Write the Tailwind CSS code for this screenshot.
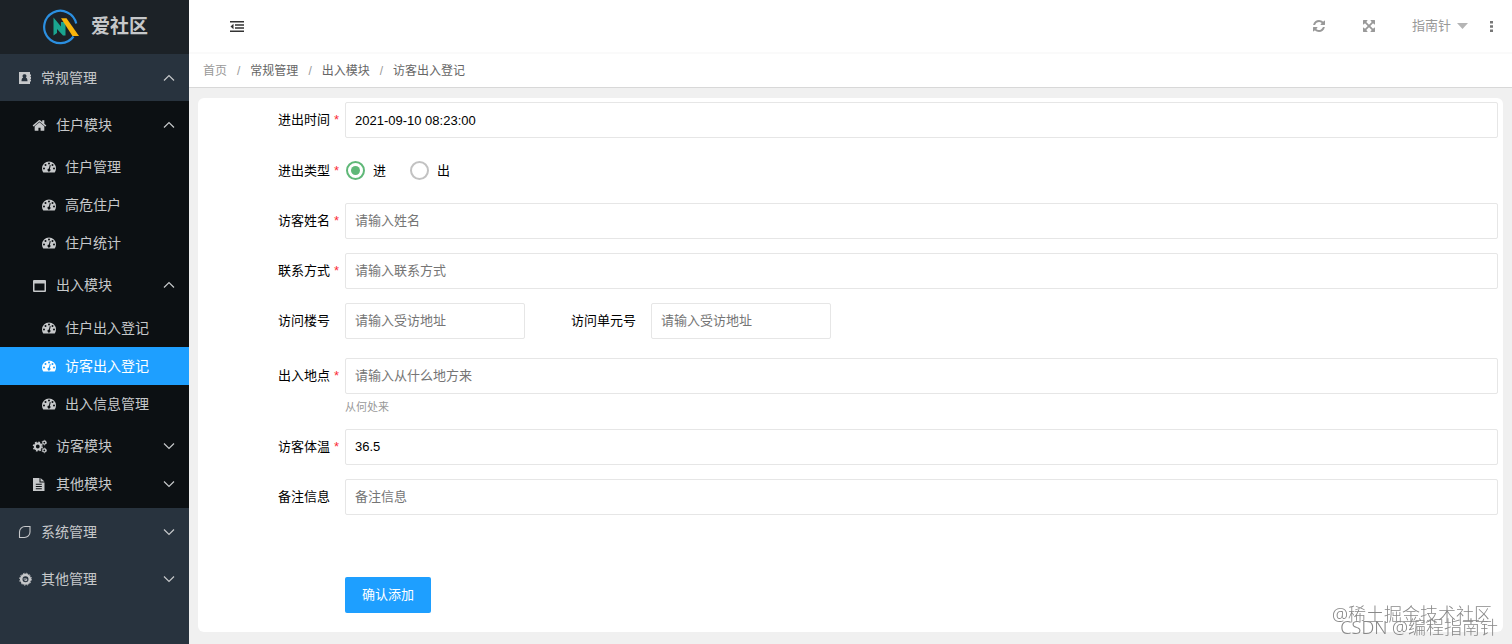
<!DOCTYPE html>
<html lang="zh-CN">
   <head>
      <meta charset="UTF-8" />
      <meta name="viewport" content="width=device-width, initial-scale=1.0" />
      <title>爱社区</title>
      <script src="https://cdn.jsdelivr.net/npm/@tailwindcss/browser@4"></script>
   </head>
   <body
      class="min-h-screen flex bg-[#f0f0f0] text-[13px] text-black font-['Liberation_Sans','Noto_Sans_CJK_SC',sans-serif]"
   >
      <!-- shared icons -->
      <svg class="hidden">
         <symbol id="dash" viewBox="0 0 14 12">
            <path
               fill="currentColor"
               fill-rule="evenodd"
               d="M7 .5a7 7 0 0 1 7 7c0 1.4-.4 2.6-1.1 3.7-.2.2-.4.3-.6.3H1.7c-.2 0-.4-.1-.6-.3A6.800 6.800 0 0 1 0 7.500a7 7 0 0 1 7-7zM2 6.500a1 1 0 1 0 0 2 1 1 0 0 0 0-2zM3.500 3a1 1 0 1 0 0 2 1 1 0 0 0 0-2zM7 1.500a1 1 0 1 0 0 2 1 1 0 0 0 0-2zM10.500 3a1 1 0 1 0 0 2 1 1 0 0 0 0-2zM12 6.500a1 1 0 1 0 0 2 1 1 0 0 0 0-2zM7.700 4.300l-.8 3.200a1.500 1.500 0 1 0 1 .3l.8-3.200c.1-.6-.8-.9-1-.3z"
            />
         </symbol>
         <symbol id="up" viewBox="0 0 12 8">
            <path d="M1 6.500 6 1.500l5 5" fill="none" stroke="currentColor" stroke-width="1.200" />
         </symbol>
         <symbol id="down" viewBox="0 0 12 8">
            <path d="M1 1.500l5 5 5-5" fill="none" stroke="currentColor" stroke-width="1.200" />
         </symbol>
      </svg>

      <!-- sidebar -->
      <aside class="w-[189px] shrink-0 bg-[#28333e] text-sm text-[#c6c8ca]">
         <div class="h-[54px] flex items-center pl-[43px] gap-3 bg-[#1c2227]">
            <svg class="size-9" viewBox="0 0 36 36" fill="none">
               <path
                  d="M33.200 14.500A16.200 16.200 0 1 0 30.500 27.500"
                  stroke="#2b8fe0"
                  stroke-width="2.200"
               />
               <path d="M10.500 8.500 18 17.500V13h4.500v13.500h-2.500L14 20v4l-3.500 2.500z" fill="#1aa58f" />
               <path d="M18 9.300h5.500L36 27h-6.500z" fill="#f9b50b" />
            </svg>
            <h1 class="text-[19px] font-bold">爱社区</h1>
         </div>
         <nav>
            <a href="#" class="h-[47px] flex items-center pl-[18px] pr-[14px]">
               <svg class="w-[14px] h-[14px] mr-[9px]" viewBox="0 0 14 14">
                  <path
                     fill="currentColor"
                     fill-rule="evenodd"
                     d="M1 1h11v2.500h1v2h-1V6h1v2h-1v.5h1v2h-1V13H1zM6.500 3.200a1.800 1.800 0 0 0-1.300 3.200C4 6.800 3.500 8 3.500 10.300h6c0-2.300-.5-3.500-1.700-3.900a1.800 1.800 0 0 0-1.300-3.200z"
                  />
               </svg>
               常规管理
               <svg class="w-3 h-2 ml-auto"><use href="#up" /></svg>
            </a>
            <div class="bg-[#0c1013] py-[5px]">
               <a href="#" class="h-[38px] flex items-center pl-8 pr-[14px]">
                  <svg class="size-[15px] mr-[9px]" viewBox="0 0 1792 1792">
                     <path
                        fill="currentColor"
                        d="M1472 992v480q0 26-19 45t-45 19h-384v-384h-256v384h-384q-26 0-45-19t-19-45v-480q0-1 .5-3t.5-3l575-474 575 474q1 2 1 6zm223-69l-62 74q-8 9-21 11h-3q-13 0-21-7l-692-577-692 577q-12 8-24 7-13-2-21-11l-62-74q-8-10-7-23.500t11-21.500l719-599q32-26 76-26t76 26l244 204v-195q0-14 9-23t23-9h192q14 0 23 9t9 23v408l219 182q10 8 11 21.500t-7 23.500z"
                     />
                  </svg>
                  住户模块
                  <svg class="w-3 h-2 ml-auto"><use href="#up" /></svg>
               </a>
               <div class="py-1">
                  <a href="#" class="h-[38px] flex items-center gap-[9px] pl-[42px]">
                     <svg class="w-[14px] h-3"><use href="#dash" /></svg>住户管理
                  </a>
                  <a href="#" class="h-[38px] flex items-center gap-[9px] pl-[42px]">
                     <svg class="w-[14px] h-3"><use href="#dash" /></svg>高危住户
                  </a>
                  <a href="#" class="h-[38px] flex items-center gap-[9px] pl-[42px]">
                     <svg class="w-[14px] h-3"><use href="#dash" /></svg>住户统计
                  </a>
               </div>
               <a href="#" class="h-[38px] flex items-center pl-8 pr-[14px]">
                  <svg class="size-[15px] mr-[9px]" viewBox="0 0 15 15">
                     <path
                        fill="currentColor"
                        fill-rule="evenodd"
                        d="M2 2h11a1 1 0 0 1 1 1v10a1 1 0 0 1-1 1H2a1 1 0 0 1-1-1V3a1 1 0 0 1 1-1zm.500 3.500v7h10v-7z"
                     />
                  </svg>
                  出入模块
                  <svg class="w-3 h-2 ml-auto"><use href="#up" /></svg>
               </a>
               <div class="pt-[5px] pb-1">
                  <a href="#" class="h-[38px] flex items-center gap-[9px] pl-[42px]">
                     <svg class="w-[14px] h-3"><use href="#dash" /></svg>住户出入登记
                  </a>
                  <a
                     href="#"
                     class="h-[38px] flex items-center gap-[9px] pl-[42px] bg-[#1e9fff] text-white"
                  >
                     <svg class="w-[14px] h-3"><use href="#dash" /></svg>访客出入登记
                  </a>
                  <a href="#" class="h-[38px] flex items-center gap-[9px] pl-[42px]">
                     <svg class="w-[14px] h-3"><use href="#dash" /></svg>出入信息管理
                  </a>
               </div>
               <a href="#" class="h-[38px] flex items-center pl-8 pr-[14px]">
                  <svg
                     class="size-[15px] mr-[9px]"
                     viewBox="0 0 15 15"
                     fill="none"
                     stroke="currentColor"
                  >
                     <circle cx="5.800" cy="7.500" r="2.900" stroke-width="2" />
                     <circle
                        cx="5.800"
                        cy="7.500"
                        r="4.300"
                        stroke-width="1.600"
                        stroke-dasharray="1.700 1.677"
                     />
                     <circle cx="12.300" cy="3.600" r="1.500" stroke-width="1.200" />
                     <circle
                        cx="12.300"
                        cy="3.600"
                        r="2.300"
                        stroke-width=".8"
                        stroke-dasharray="1.200 1.209"
                     />
                     <circle cx="12.300" cy="11.400" r="1.500" stroke-width="1.200" />
                     <circle
                        cx="12.300"
                        cy="11.400"
                        r="2.300"
                        stroke-width=".8"
                        stroke-dasharray="1.200 1.209"
                     />
                  </svg>
                  访客模块
                  <svg class="w-3 h-2 ml-auto"><use href="#down" /></svg>
               </a>
               <a href="#" class="h-[38px] flex items-center pl-8 pr-[14px]">
                  <svg class="size-[15px] mr-[9px]" viewBox="0 0 15 15">
                     <path
                        fill="currentColor"
                        fill-rule="evenodd"
                        d="M1 1h6.500v4.500H12.500V14H1zM8.500 1l4 3.600h-4zM3.800 6.800v1h6v-1zm0 2.200v1h6V9zm0 2.200v1h6v-1z"
                     />
                  </svg>
                  其他模块
                  <svg class="w-3 h-2 ml-auto"><use href="#down" /></svg>
               </a>
            </div>
            <a href="#" class="h-[47px] flex items-center pl-[18px] pr-[14px]">
               <svg class="w-[14px] h-[14px] mr-[9px]" viewBox="0 0 14 14">
                  <path
                     fill="none"
                     stroke="currentColor"
                     stroke-width="1.100"
                     d="M1.500 12.500V7A5.500 5.500 0 0 1 7 1.500h5V7a5.500 5.500 0 0 1-5.500 5.500z"
                  />
               </svg>
               系统管理
               <svg class="w-3 h-2 ml-auto"><use href="#down" /></svg>
            </a>
            <a href="#" class="h-[47px] flex items-center pl-[18px] pr-[14px]">
               <svg
                  class="w-[14px] h-[14px] mr-[9px]"
                  viewBox="0 0 14 14"
                  fill="none"
                  stroke="currentColor"
               >
                  <circle cx="7.500" cy="7.200" r="4.300" stroke-width="2.600" />
                  <circle
                     cx="7.500"
                     cy="7.200"
                     r="6"
                     stroke-width="1"
                     stroke-dasharray="1.300 1.841"
                  />
                  <path d="M5.500 7h3.200v1.600H6.500" stroke-width="1" />
               </svg>
               其他管理
               <svg class="w-3 h-2 ml-auto"><use href="#down" /></svg>
            </a>
         </nav>
      </aside>

      <div class="flex-1 min-w-0">
         <!-- top bar -->
         <header
            class="h-[54px] flex items-center pl-[41px] pr-[19px] bg-white border-b-2 border-[#fafafa] text-[#999]"
         >
            <button aria-label="收起菜单" class="text-[#333]">
               <svg class="w-[14px] h-[11px]" viewBox="0 0 14 11">
                  <path
                     fill="currentColor"
                     d="M0 0h14v1.600H0zM5 3.200h9v1.500H5zM5 6.300h9v1.500H5zM0 9.400h14V11H0zM3.500 2.800v5.400L.5 5.500z"
                  />
               </svg>
            </button>
            <button aria-label="刷新" class="ml-auto">
               <svg class="size-[14px]" viewBox="0 0 1792 1792">
                  <path
                     fill="currentColor"
                     d="M1639 1056q0 5-1 7-64 268-268 434.500t-478 166.500q-146 0-282.500-55t-243.500-157l-129 129q-19 19-45 19t-45-19-19-45v-448q0-26 19-45t45-19h448q26 0 45 19t19 45-19 45l-137 137q71 66 161 102t187 36q134 0 250-65t186-179q11-17 53-117 8-23 30-23h192q13 0 22.500 9.500t9.500 22.500zm25-800v448q0 26-19 45t-45 19h-448q-26 0-45-19t-19-45 19-45l138-138q-148-137-349-137-134 0-250 65t-186 179q-11 17-53 117-8 23-30 23h-199q-13 0-22.500-9.500t-9.500-22.500v-7q65-268 270-434.500t480-166.500q146 0 284 55.500t245 156.500l130-129q19-19 45-19t45 19 19 45z"
                  />
               </svg>
            </button>
            <button aria-label="全屏" class="ml-9">
               <svg class="size-[14px]" viewBox="0 0 1792 1792">
                  <path
                     fill="currentColor"
                     d="M1411 541l-355 355 355 355 144-144q29-31 70-14 39 17 39 59v448q0 26-19 45t-45 19h-448q-42 0-59-40-17-39 14-69l144-144-355-355-355 355 144 144q31 30 14 69-17 40-59 40h-448q-26 0-45-19t-19-45v-448q0-42 40-59 39-17 69 14l144 144 355-355-355-355-144 144q-19 19-45 19-12 0-24-5-40-17-40-59v-448q0-26 19-45t45-19h448q42 0 59 40 17 39-14 69l-144 144 355 355 355-355-144-144q-31-30-14-69 17-40 59-40h448q26 0 45 19t19 45v448q0 42-39 59-13 5-25 5-26 0-45-19z"
                  />
               </svg>
            </button>
            <button class="ml-9 flex items-center gap-[6px]">
               指南针
               <svg class="w-[11px] h-[6px]" viewBox="0 0 11 6">
                  <path fill="#b5b5b5" d="M0 0h11L5.500 6z" />
               </svg>
            </button>
            <button aria-label="更多" class="ml-[22px]">
               <svg class="w-[3px] h-[11px]" viewBox="0 0 3 11">
                  <path fill="#777" d="M0 0h3v2.600H0zM0 4.200h3v2.600H0zM0 8.400h3V11H0z" />
               </svg>
            </button>
         </header>

         <div
            class="h-[34px] flex items-center gap-[10px] pl-[14px] bg-white border-b border-[#d8d8d8] text-xs text-[#666]"
         >
            <a href="#" class="text-[#999]">首页</a>
            <span class="text-[#999]">/</span>
            <a href="#">常规管理</a>
            <span class="text-[#999]">/</span>
            <a href="#">出入模块</a>
            <span class="text-[#999]">/</span>
            <span>访客出入登记</span>
         </div>

         <!-- form -->
         <main class="pt-[10px] pl-[9px] pr-[9px] pb-3">
            <form class="bg-white rounded-md pt-1 pr-[5px] pb-[19px]">
               <div class="flex items-center mb-[14px]">
                  <label for="time" class="w-[147px] pl-20 flex gap-1">
                     进出时间<span class="text-red-500">*</span>
                  </label>
                  <input
                     id="time"
                     type="text"
                     value="2021-09-10 08:23:00"
                     class="flex-1 h-9 px-[9px] border border-[#e6e6e6] rounded-xs"
                  />
               </div>
               <div class="flex items-center h-[37px] mb-[14px]" role="radiogroup" aria-labelledby="type">
                  <span id="type" class="w-[147px] pl-20 flex gap-1">
                     进出类型<span class="text-red-500">*</span>
                  </span>
                  <label class="flex items-center gap-2 pl-px mr-6">
                     <input
                        type="radio"
                        name="type"
                        checked
                        class="appearance-none size-[19px] grid place-content-center rounded-full border-2 border-[#c2c2c2] checked:border-[#5fb878] before:size-[9px] before:rounded-full checked:before:bg-[#5fb878]"
                     />进
                  </label>
                  <label class="flex items-center gap-2">
                     <input
                        type="radio"
                        name="type"
                        class="appearance-none size-[19px] grid place-content-center rounded-full border-2 border-[#c2c2c2] checked:border-[#5fb878] before:size-[9px] before:rounded-full checked:before:bg-[#5fb878]"
                     />出
                  </label>
               </div>
               <div class="flex items-center mb-[14px]">
                  <label for="name" class="w-[147px] pl-20 flex gap-1">
                     访客姓名<span class="text-red-500">*</span>
                  </label>
                  <input
                     id="name"
                     type="text"
                     placeholder="请输入姓名"
                     class="flex-1 h-9 px-[9px] pb-[2px] border border-[#e6e6e6] rounded-xs placeholder:text-[#757575]"
                  />
               </div>
               <div class="flex items-center mb-[14px]">
                  <label for="phone" class="w-[147px] pl-20 flex gap-1">
                     联系方式<span class="text-red-500">*</span>
                  </label>
                  <input
                     id="phone"
                     type="text"
                     placeholder="请输入联系方式"
                     class="flex-1 h-9 px-[9px] pb-[2px] border border-[#e6e6e6] rounded-xs placeholder:text-[#757575]"
                  />
               </div>
               <div class="flex items-center mb-[19px]">
                  <label for="building" class="w-[147px] pl-20">访问楼号</label>
                  <input
                     id="building"
                     type="text"
                     placeholder="请输入受访地址"
                     class="w-[180px] h-9 px-[9px] pb-[2px] border border-[#e6e6e6] rounded-xs placeholder:text-[#757575]"
                  />
                  <label for="unit" class="ml-[46px] mr-[15px]">访问单元号</label>
                  <input
                     id="unit"
                     type="text"
                     placeholder="请输入受访地址"
                     class="w-[180px] h-9 px-[9px] pb-[2px] border border-[#e6e6e6] rounded-xs placeholder:text-[#757575]"
                  />
               </div>
               <div class="flex items-center">
                  <label for="place" class="w-[147px] pl-20 flex gap-1">
                     出入地点<span class="text-red-500">*</span>
                  </label>
                  <input
                     id="place"
                     type="text"
                     placeholder="请输入从什么地方来"
                     class="flex-1 h-9 px-[9px] pb-[2px] border border-[#e6e6e6] rounded-xs placeholder:text-[#757575]"
                  />
               </div>
               <p class="pl-[147px] pt-[6px] mb-[14px] text-[11px] leading-[15px] text-[#999]">
                  从何处来
               </p>
               <div class="flex items-center mb-[14px]">
                  <label for="temp" class="w-[147px] pl-20 flex gap-1">
                     访客体温<span class="text-red-500">*</span>
                  </label>
                  <input
                     id="temp"
                     type="text"
                     value="36.5"
                     class="flex-1 h-9 px-[9px] pb-[2px] border border-[#e6e6e6] rounded-xs"
                  />
               </div>
               <div class="flex items-center mb-[62px]">
                  <label for="remark" class="w-[147px] pl-20">备注信息</label>
                  <input
                     id="remark"
                     type="text"
                     placeholder="备注信息"
                     class="flex-1 h-9 px-[9px] pb-[2px] border border-[#e6e6e6] rounded-xs placeholder:text-[#757575]"
                  />
               </div>
               <button
                  type="submit"
                  class="ml-[147px] h-9 px-[17px] rounded-xs bg-[#1e9fff] text-white"
               >
                  确认添加
               </button>
            </form>
         </main>
      </div>

      <!-- watermarks -->
      <div
         class="fixed right-5 bottom-[18px] text-lg leading-6 font-light text-[#888] font-['Noto_Sans','Noto_Sans_CJK_SC',sans-serif]"
      >
         @稀土掘金技术社区
      </div>
      <div
         class="fixed right-[14px] bottom-[5px] text-lg leading-6 font-light text-[#888] font-['Noto_Sans','Noto_Sans_CJK_SC',sans-serif]"
      >
         CSDN @编程指南针
      </div>
   </body>
</html>
